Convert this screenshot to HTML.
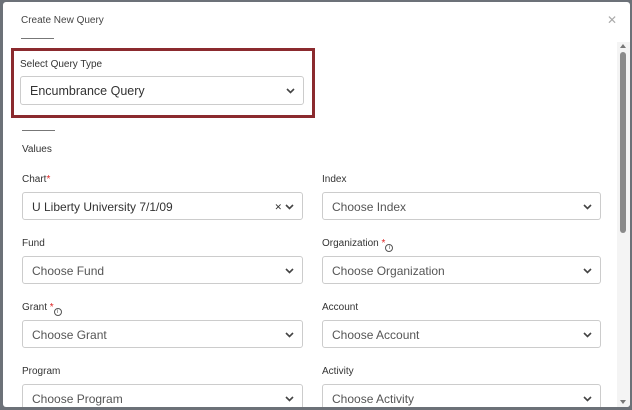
<!DOCTYPE html>
<html><head><style>
*{box-sizing:border-box;margin:0;padding:0}
body{width:632px;height:410px;background:#6c7178;position:relative;overflow:hidden;font-family:"Liberation Sans",sans-serif;color:#333}
.m{position:absolute;left:3px;top:2px;width:627px;height:405px;background:#fff;border-radius:3px;overflow:hidden}
.a{position:absolute}
.t{font-size:10px;color:#444}
.lab{font-size:10px;color:#333;position:absolute}
.sel{position:absolute;height:28px;border:1px solid #ccc;border-radius:3px;background:#fff;font-size:12px;color:#555;padding-left:9px;line-height:28px}
.sel svg{position:absolute;right:8px;top:11px}
.hr{position:absolute;height:1px;background:#777;width:33px}
.star{color:#d22;font-size:10px}
.i{display:inline-block;width:8px;height:8px;border:1px solid #555;border-radius:50%;font-size:6px;line-height:6px;text-align:center;vertical-align:-3px;color:#555}
</style></head><body>
<div class="m">
<div class="a t" style="left:18px;top:13px">Create New Query</div>
<div class="a" style="left:604px;top:11px;color:#aaa;font-size:12px">✕</div>
<div class="hr" style="left:18px;top:36px"></div>
<div class="a" style="left:8px;top:46px;width:304px;height:70px;border:3px solid #8b2a2e"></div>
<div class="lab" style="left:17px;top:57px">Select Query Type</div>
<div class="sel" style="left:17px;top:74px;width:284px;height:29px;color:#333;font-size:12.5px;line-height:29px">Encumbrance Query<svg width="9" height="6" viewBox="0 0 9 6"><path d="M1 1l3.5 3.5L8 1" stroke="#444" stroke-width="1.6" fill="none"/></svg></div>
<div class="hr" style="left:19px;top:128px"></div>
<div class="lab" style="left:19px;top:142px">Values</div>

<div class="lab" style="left:19px;top:172px">Chart<span class="star">*</span></div>
<div class="sel" style="left:19px;top:190px;width:281px;color:#333">U Liberty University 7/1/09<span class="a" style="right:20px;top:0;font-size:9px;color:#333">✕</span><svg width="9" height="6" viewBox="0 0 9 6"><path d="M1 1l3.5 3.5L8 1" stroke="#444" stroke-width="1.6" fill="none"/></svg></div>
<div class="lab" style="left:319px;top:172px">Index</div>
<div class="sel" style="left:319px;top:190px;width:279px">Choose Index<svg width="9" height="6" viewBox="0 0 9 6"><path d="M1 1l3.5 3.5L8 1" stroke="#444" stroke-width="1.6" fill="none"/></svg></div>

<div class="lab" style="left:19px;top:236px">Fund</div>
<div class="sel" style="left:19px;top:254px;width:281px">Choose Fund<svg width="9" height="6" viewBox="0 0 9 6"><path d="M1 1l3.5 3.5L8 1" stroke="#444" stroke-width="1.6" fill="none"/></svg></div>
<div class="lab" style="left:319px;top:236px">Organization <span class="star">*</span><span class="i">i</span></div>
<div class="sel" style="left:319px;top:254px;width:279px">Choose Organization<svg width="9" height="6" viewBox="0 0 9 6"><path d="M1 1l3.5 3.5L8 1" stroke="#444" stroke-width="1.6" fill="none"/></svg></div>

<div class="lab" style="left:19px;top:300px">Grant <span class="star">*</span><span class="i">i</span></div>
<div class="sel" style="left:19px;top:318px;width:281px">Choose Grant<svg width="9" height="6" viewBox="0 0 9 6"><path d="M1 1l3.5 3.5L8 1" stroke="#444" stroke-width="1.6" fill="none"/></svg></div>
<div class="lab" style="left:319px;top:300px">Account</div>
<div class="sel" style="left:319px;top:318px;width:279px">Choose Account<svg width="9" height="6" viewBox="0 0 9 6"><path d="M1 1l3.5 3.5L8 1" stroke="#444" stroke-width="1.6" fill="none"/></svg></div>

<div class="lab" style="left:19px;top:364px">Program</div>
<div class="sel" style="left:19px;top:382px;width:281px">Choose Program<svg width="9" height="6" viewBox="0 0 9 6"><path d="M1 1l3.5 3.5L8 1" stroke="#444" stroke-width="1.6" fill="none"/></svg></div>
<div class="lab" style="left:319px;top:364px">Activity</div>
<div class="sel" style="left:319px;top:382px;width:279px">Choose Activity<svg width="9" height="6" viewBox="0 0 9 6"><path d="M1 1l3.5 3.5L8 1" stroke="#444" stroke-width="1.6" fill="none"/></svg></div>

<div class="a" style="left:614px;top:40px;width:13px;height:365px;background:#f4f4f4"></div>
<div class="a" style="left:617px;top:42px;width:0;height:0;border-left:3px solid transparent;border-right:3px solid transparent;border-bottom:4px solid #777"></div>
<div class="a" style="left:617px;top:50px;width:6px;height:181px;background:#8a8a8a;border-radius:3px"></div>
<div class="a" style="left:617px;top:398px;width:0;height:0;border-left:3px solid transparent;border-right:3px solid transparent;border-top:4px solid #777"></div>
</div>
</body></html>
